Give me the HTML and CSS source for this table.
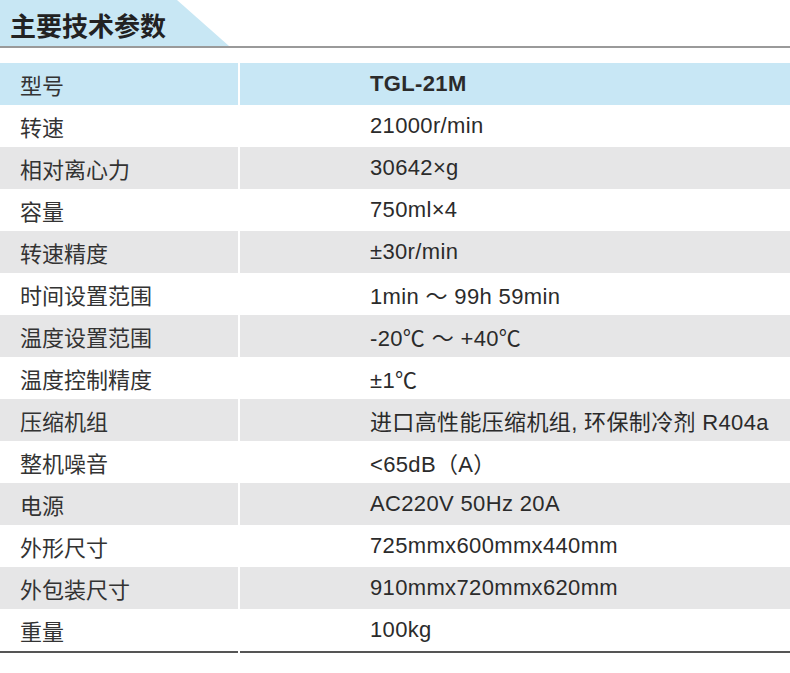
FILE: index.html
```html
<!DOCTYPE html>
<html lang="zh-CN">
<head>
<meta charset="utf-8">
<title>主要技术参数</title>
<link rel="stylesheet" href="styles.css">
</head>
<body>
<div class="title-bar">
  <h1 class="title">主要技术参数</h1>
</div>
<div class="spec">
  <div class="row head"><div class="k">型号</div><div class="v b">TGL-21M</div></div>
  <div class="row"><div class="k">转速</div><div class="v">21000r/min</div></div>
  <div class="row alt"><div class="k">相对离心力</div><div class="v">30642×g</div></div>
  <div class="row"><div class="k">容量</div><div class="v">750ml×4</div></div>
  <div class="row alt"><div class="k">转速精度</div><div class="v">±30r/min</div></div>
  <div class="row"><div class="k">时间设置范围</div><div class="v">1min ～ 99h 59min</div></div>
  <div class="row alt"><div class="k">温度设置范围</div><div class="v">-20℃ ～ +40℃</div></div>
  <div class="row"><div class="k">温度控制精度</div><div class="v">±1℃</div></div>
  <div class="row alt"><div class="k">压缩机组</div><div class="v">进口高性能压缩机组, 环保制冷剂 R404a</div></div>
  <div class="row"><div class="k">整机噪音</div><div class="v">&lt;65dB（A）</div></div>
  <div class="row alt"><div class="k">电源</div><div class="v">AC220V 50Hz 20A</div></div>
  <div class="row"><div class="k">外形尺寸</div><div class="v">725mmx600mmx440mm</div></div>
  <div class="row alt"><div class="k">外包装尺寸</div><div class="v">910mmx720mmx620mm</div></div>
  <div class="row last"><div class="k">重量</div><div class="v">100kg</div></div>
</div>
</body>
</html>
```
FILE: styles.css
```css
html, body {
  margin: 0;
  padding: 0;
  background: #fff;
}
body {
  width: 790px;
  font-family: "Liberation Sans", "Noto Sans CJK SC", sans-serif;
  color: #333;
}
.title-bar {
  height: 46px;
  border-bottom: 2px solid #9a9a9a;
}
.title {
  box-sizing: border-box;
  width: 229px;
  height: 46px;
  margin: 0;
  padding: 3px 0 0 10px;
  background: #c8e7f4;
  clip-path: polygon(0 0, 177px 0, 229px 46px, 0 46px);
  font-size: 26px;
  line-height: 43px;
  font-weight: bold;
  color: #222;
  font-family: "Noto Sans CJK SC", sans-serif;
}
.spec {
  margin-top: 15px;
}
.row {
  display: grid;
  grid-template-columns: 238px 1fr;
  column-gap: 2px;
  height: 42px;
}
.row > div {
  display: flex;
  align-items: center;
  font-size: 22px;
}
.k {
  padding-left: 20px;
  color: #333;
  font-family: "Noto Sans CJK SC", sans-serif;
}
.v {
  padding-left: 130px;
  letter-spacing: 0.35px;
  color: #2b2b2b;
}
.head > div {
  background: #c8e7f5;
}
.alt > div {
  background: #e6e6e7;
}
.b {
  font-weight: bold;
}
.last {
  height: 44px;
}
.last > div {
  box-sizing: border-box;
  border-bottom: 2px solid #555;
}
```
